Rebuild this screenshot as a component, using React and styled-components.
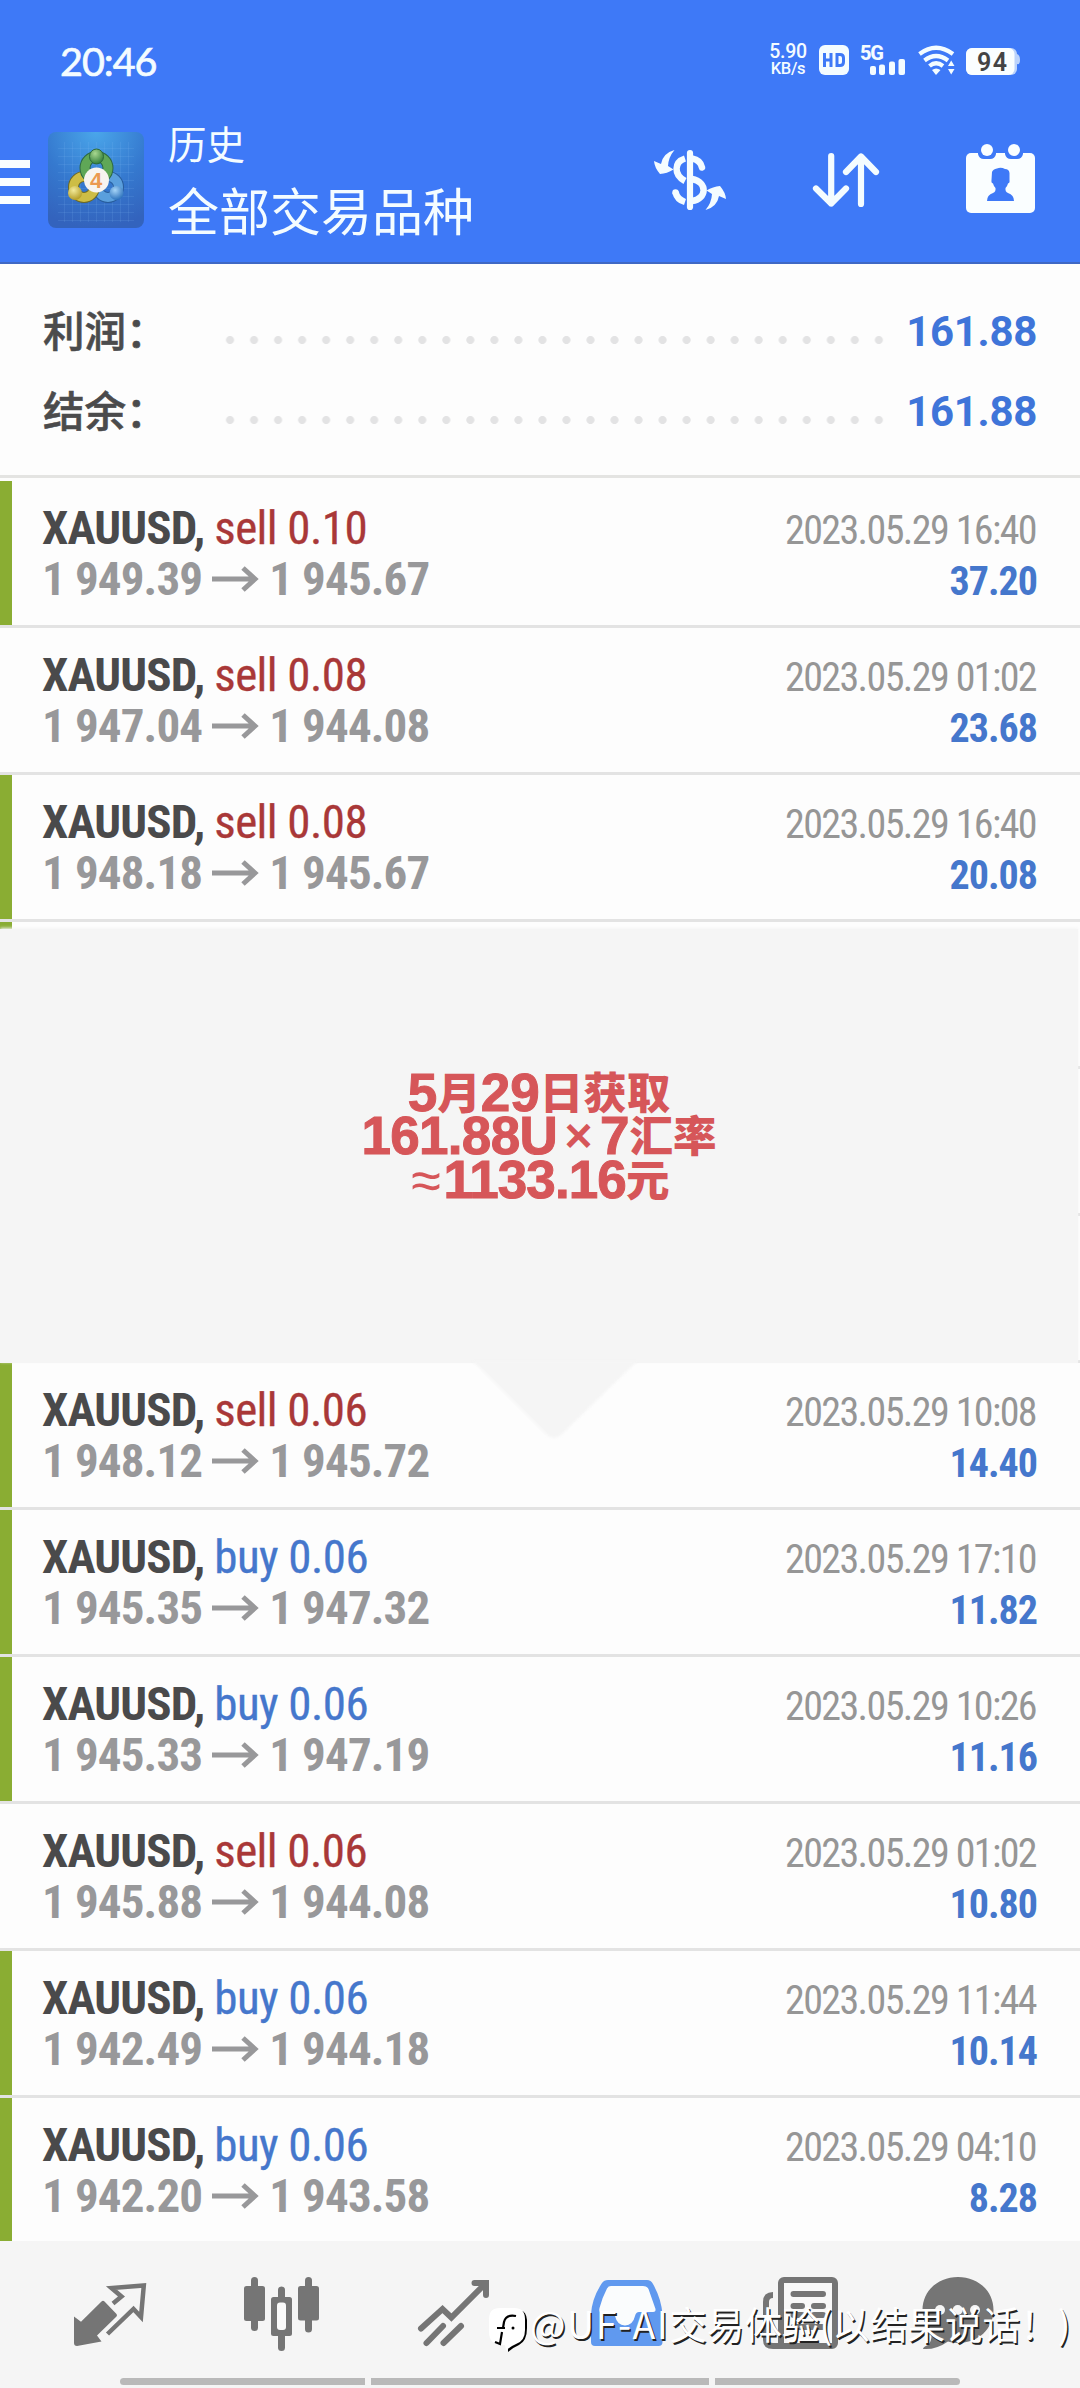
import React from "react";
import styled, { createGlobalStyle } from "styled-components";

const EstiloGlobal = createGlobalStyle`
  * {
    box-sizing: border-box;
  }
  body {
    margin: 0;
    background: #fdfdfd;
    font-family: Roboto, "Noto Sans CJK SC", sans-serif;
  }
  svg {
    display: block;
    flex: none;
  }
`;

const Pantalla = styled.div`
  position: relative;
  width: 1080px;
  height: 2388px;
  display: flex;
  flex-direction: column;
  overflow: hidden;
  background: #fdfdfd;
`;

const Header = styled.header`
  flex: none;
  height: 264px;
  background: #3e79f7;
  border-bottom: 2px solid #3f68c4;
  color: #f4fcff;
`;

const BarraEstado = styled.div`
  height: 118px;
  padding: 2px 60px 0 60px;
  display: flex;
  align-items: center;
  justify-content: space-between;
`;

const Hora = styled.div`
  font: 400 39.5px/48px Lato, sans-serif;
  letter-spacing: -1px;
  padding-top: 1px;
  -webkit-text-stroke: 0.7px #f4fcff;
`;

const Indicadores = styled.div`
  display: flex;
  align-items: center;
  gap: 11px;
`;

const Velocidad = styled.div`
  width: 40px;
  font: 500 19.5px/17px Roboto, sans-serif;
  letter-spacing: -0.3px;
  text-align: center;
  white-space: nowrap;
  small {
    display: block;
    font-size: 16.5px;
  }
`;

const Toolbar = styled.div`
  height: 144px;
  padding-right: 36px;
  display: flex;
  align-items: flex-start;
`;

const Hamburguesa = styled.div`
  width: 30px;
  margin: 42px 18px 0 0;
  display: grid;
  gap: 10px;
  i {
    height: 8px;
    background: #fafeff;
  }
`;

const Logo = styled.div`
  margin: 14px 24px 0 0;
`;

const Titulos = styled.div`
  flex: 1;
  font-family: "Noto Sans CJK SC", sans-serif;
`;

const Subtitulo = styled.div`
  font-size: 38.5px;
  line-height: 48px;
`;

const Titulo = styled.div`
  font-size: 51px;
  line-height: 86px;
`;

const Acciones = styled.div`
  display: flex;
  gap: 72px;
  padding-top: 20px;
`;

const Resumen = styled.section`
  flex: none;
  height: 214px;
  padding: 28px 43px 0;
  border-bottom: 3px solid #e4e4e2;
  margin-bottom: 3px;
`;

const FilaResumen = styled.div`
  display: flex;
  height: 80px;
`;

const Etiqueta = styled.div`
  width: 175px;
  font: 500 41.5px/74px "Noto Sans CJK SC", sans-serif;
  color: #4b4b4c;
  -webkit-text-stroke: 0.6px #4b4b4c;
`;

const Puntos = styled.div`
  width: 673px;
  height: 8px;
  margin-top: 44px;
  background: radial-gradient(circle at center, #e3e3e4 3.6px, transparent 4.4px) 0 0 / 24.04px 8px;
`;

const Total = styled.div`
  flex: 1;
  text-align: right;
  font: 700 42px/80px Roboto, sans-serif;
  color: #3f75d9;
  letter-spacing: -0.3px;
`;

const Lista = styled.main`
  flex: none;
`;

const Fila = styled.div`
  display: flex;
  height: ${(p) => (p.$ultima ? "143px" : "147px")};
  border-bottom: ${(p) => (p.$ultima ? "none" : "3px solid #e3e3e3")};
  font-family: "Roboto Condensed", Roboto, sans-serif;
`;

const Marca = styled.div`
  width: 12px;
  margin-right: 30px;
  background: ${(p) => (p.$activa ? "#8aad33" : "transparent")};
`;

const Operacion = styled.div`
  flex: 1;
  padding-top: 21px;
  font-size: 47px;
  line-height: 51px;
  letter-spacing: -0.85px;
  white-space: nowrap;
`;

const Simbolo = styled.b`
  color: #4a4a4b;
`;

const Tipo = styled.span`
  color: ${(p) => (p.$tipo === "sell" ? "#a93838" : "#4577cc")};
  letter-spacing: -0.55px;
  -webkit-text-stroke: 0.3px;
`;

const Precios = styled.div`
  display: flex;
  align-items: center;
  color: #98989a;
  font-weight: 700;
  svg {
    margin: 0 10px 0 10px;
  }
`;

const Resultado = styled.div`
  padding: 24px 43px 0 0;
  text-align: right;
  font-size: 40px;
  line-height: 51px;
`;

const Fecha = styled.div`
  color: #969696;
  letter-spacing: -1.6px;
  padding-right: 1px;
`;

const Ganancia = styled.div`
  color: #4577cc;
  font-weight: 700;
  letter-spacing: -1px;
`;

const Bloque = styled.div`
  position: relative;
`;

const Globo = styled.div`
  position: absolute;
  left: 0;
  top: 7px;
  width: 1078px;
  height: 434px;
  background: #f5f5f5;
  box-shadow: 0 -1px 3px #f5f5f5;
  display: flex;
  flex-direction: column;
  align-items: center;
  padding-top: 142px;
  color: #d65659;
`;

const Punta = styled.svg`
  position: absolute;
  left: 470px;
  top: 439px;
  filter: blur(1px);
`;

const LineaGlobo = styled.div`
  height: 43.5px;
  display: flex;
  align-items: center;
  white-space: nowrap;
`;

const Cifra = styled.span`
  font: 700 53px/44px "Liberation Sans", Arial, sans-serif;
  letter-spacing: ${(p) => p.$ls || "0"};
  -webkit-text-stroke: 1px #d65659;
`;

const Hanzi = styled.span`
  margin-bottom: 4px;
  font: 900 43.5px/44px "Noto Sans CJK SC", sans-serif;
`;

const Signo = styled.span`
  width: ${(p) => p.$w}px;
  text-align: center;
  font: ${(p) => p.$peso} ${(p) => p.$t}px/44px "Liberation Sans", Arial, sans-serif;
`;

const Tabs = styled.nav`
  flex: none;
  height: 147px;
  padding: 31px 0 0 68px;
  display: flex;
  align-items: flex-start;
  gap: 88px;
  background: #f5f5f5;
  > svg:last-child {
    margin-left: -12px;
  }
`;

const Gesto = styled.div`
  position: absolute;
  left: 120px;
  bottom: 3px;
  width: 840px;
  height: 7px;
  border-radius: 4px;
  overflow: hidden;
  display: grid;
  grid-template-columns: 245px 338px 245px;
  gap: 6px;
  i {
    background: #b9b9b9;
  }
`;

const Autor = styled.div`
  position: absolute;
  left: 488px;
  top: 2300px;
  display: flex;
  gap: 2px;
  font: 400 37.6px/46px "Noto Sans CJK SC", sans-serif;
  color: #fff;
  white-space: nowrap;
  text-shadow: 1.5px 1.5px 0.5px #222;
  svg {
    margin-top: 4px;
  }
  b {
    font-weight: 400;
    letter-spacing: 1.5px;
  }
`;

const operaciones = [
  { tipo: "sell", lote: "0.10", de: "1 949.39", a: "1 945.67", fecha: "2023.05.29 16:40", ganancia: "37.20", activa: true },
  { tipo: "sell", lote: "0.08", de: "1 947.04", a: "1 944.08", fecha: "2023.05.29 01:02", ganancia: "23.68" },
  { tipo: "sell", lote: "0.08", de: "1 948.18", a: "1 945.67", fecha: "2023.05.29 16:40", ganancia: "20.08", activa: true },
];

const operacionesAbajo = [
  { tipo: "sell", lote: "0.06", de: "1 948.12", a: "1 945.72", fecha: "2023.05.29 10:08", ganancia: "14.40", activa: true },
  { tipo: "buy", lote: "0.06", de: "1 945.35", a: "1 947.32", fecha: "2023.05.29 17:10", ganancia: "11.82", activa: true },
  { tipo: "buy", lote: "0.06", de: "1 945.33", a: "1 947.19", fecha: "2023.05.29 10:26", ganancia: "11.16", activa: true },
  { tipo: "sell", lote: "0.06", de: "1 945.88", a: "1 944.08", fecha: "2023.05.29 01:02", ganancia: "10.80" },
  { tipo: "buy", lote: "0.06", de: "1 942.49", a: "1 944.18", fecha: "2023.05.29 11:44", ganancia: "10.14", activa: true },
  { tipo: "buy", lote: "0.06", de: "1 942.20", a: "1 943.58", fecha: "2023.05.29 04:10", ganancia: "8.28", activa: true },
];

const FilaOperacion = ({ op, ultima }) => (
  <Fila $ultima={ultima}>
    <Marca $activa={op.activa} />
    <Operacion>
      <div>
        <Simbolo>XAUUSD,</Simbolo>{" "}
        <Tipo $tipo={op.tipo}>
          {op.tipo} {op.lote}
        </Tipo>
      </div>
      <Precios>
        {op.de}
        <svg width="47" height="26" viewBox="0 0 47 26" fill="none" stroke="#98989a" strokeWidth="5">
          <path d="M0 13H43M31 2L43 13L31 24" />
        </svg>
        {op.a}
      </Precios>
    </Operacion>
    <Resultado>
      <Fecha>{op.fecha}</Fecha>
      <Ganancia>{op.ganancia}</Ganancia>
    </Resultado>
  </Fila>
);

const IconoApp = () => (
  <svg width="96" height="96" viewBox="0 0 96 96">
    <defs>
      <radialGradient id="fondo" cx="0.5" cy="0" r="1">
        <stop offset="0" stopColor="#4aa6ea" />
        <stop offset="0.55" stopColor="#3579cf" />
        <stop offset="1" stopColor="#3363bd" />
      </radialGradient>
      <pattern id="malla" width="8" height="8" patternUnits="userSpaceOnUse">
        <path d="M0 .5H8M.5 0V8" stroke="#8cc4f4" strokeOpacity="0.13" />
      </pattern>
      <radialGradient id="verde" cx="0.4" cy="0.3" r="0.7">
        <stop offset="0" stopColor="#a8d890" />
        <stop offset="1" stopColor="#35803c" />
      </radialGradient>
      <radialGradient id="oro" cx="0.4" cy="0.3" r="0.7">
        <stop offset="0" stopColor="#f2ea9a" />
        <stop offset="1" stopColor="#b59e28" />
      </radialGradient>
      <radialGradient id="azul" cx="0.4" cy="0.3" r="0.7">
        <stop offset="0" stopColor="#a5d4f7" />
        <stop offset="1" stopColor="#2e73bd" />
      </radialGradient>
    </defs>
    <rect width="96" height="96" rx="8" fill="url(#fondo)" />
    <rect x="10" y="10" width="76" height="80" fill="url(#malla)" />
    <g fill="none" strokeWidth="9">
      <circle cx="60" cy="55" r="10.500" stroke="#285d9c" strokeWidth="11" />
      <circle cx="60" cy="55" r="10.500" stroke="#5a9fdd" />
      <circle cx="36" cy="55" r="10.500" stroke="#6d6a26" strokeWidth="11" />
      <circle cx="36" cy="55" r="10.500" stroke="#cdbd45" />
      <circle cx="48.500" cy="36" r="11.500" stroke="#2c6843" strokeWidth="11" />
      <circle cx="48.500" cy="36" r="11.500" stroke="#5fa757" />
    </g>
    <ellipse cx="48.500" cy="24.500" rx="7" ry="7.500" fill="url(#verde)" stroke="#2b683a" />
    <circle cx="27" cy="61" r="7" fill="url(#oro)" />
    <circle cx="68.500" cy="61" r="7" fill="url(#azul)" />
    <circle cx="48.500" cy="48" r="12.500" fill="#f7f4f0" />
    <text x="48" y="55.500" textAnchor="middle" fontSize="22" fontFamily="Liberation Sans" fontWeight="700" fill="#eb9a50">
      4
    </text>
  </svg>
);

const flecha = "M26.500 12Q15 15 13 26L6 23Q6.500 29.500 12 36Q19 35.500 25.500 31.500L20 28Q20.500 19 26.500 12Z";

const IconoDolar = () => (
  <svg width="84" height="84" viewBox="0 0 84 84" fill="none" stroke="#f4fcff" strokeWidth="6.500" strokeLinecap="round">
    <path d="M42 15V69" strokeWidth="6.200" />
    <path d="M37 20.500C26 24 25.500 37 37 43M37 64Q29 61.500 27.500 54" strokeLinecap="butt" />
    <circle cx="27.500" cy="54.500" r="3.200" fill="#f4fcff" stroke="none" />
    <path d="M44 20.500Q52.500 22 54 29.500M44 41C60 44 59 61 44 63" />
    <path d={flecha} fill="#f4fcff" stroke="none" />
    <path d={flecha} fill="#f4fcff" stroke="none" transform="rotate(180 42 42)" />
  </svg>
);

const IconoOrden = () => (
  <svg width="84" height="84" viewBox="0 0 84 84" fill="none" stroke="#f4fcff" strokeWidth="6.200" strokeLinecap="round" strokeLinejoin="round">
    <path d="M27.200 18V65.500M12 50.500L27.200 65.500L42 50.500" />
    <path d="M57 66V18.500M42 34L57 18.500L72 34" />
  </svg>
);

const IconoCalendario = () => (
  <svg width="84" height="84" viewBox="0 0 84 84">
    <rect x="6" y="15" width="69" height="60" rx="5" fill="#fafeff" />
    <g fill="#3e79f7">
      <path d="M18 14V16Q19 21 24 21H30Q35 21 36 16V14ZM45 14V16Q46 21 51 21H57Q62 21 63 16V14Z" />
      <path d="M32 34Q33 31 37 30.500Q41 29 45 31Q49 31 49.500 35V42Q50 45 48 45.500Q47 49 45.500 50Q45 54 48 55Q54 57 54 63H27Q27 57 33 55Q36 54 35.500 50Q34 49 33 45.500Q31 45 31.500 42Z" />
    </g>
    <circle cx="27" cy="12" r="6" fill="#fafeff" />
    <circle cx="54" cy="12" r="6" fill="#fafeff" />
  </svg>
);

const App = () => {
  return (
    <>
      <EstiloGlobal />
      <Pantalla>
        <Header>
          <BarraEstado>
            <Hora>20:46</Hora>
            <Indicadores>
              <Velocidad>
                5.90
                <small>KB/s</small>
              </Velocidad>
              <svg width="30" height="30" viewBox="0 0 30 30">
                <rect width="30" height="30" rx="6" fill="#f4fcff" />
                <path d="M5.500 8V22M12 8V22M5.500 15H12M18 9.500H21Q24.500 9.500 24.500 13V17Q24.500 20.500 21 20.500H18Z" fill="none" stroke="#3e79f7" strokeWidth="3" />
              </svg>
              <svg width="47" height="30" viewBox="0 0 47 30" fill="#f4fcff" overflow="visible">
                <text x="0" y="14.500" fontSize="20" fontFamily="Roboto" fontWeight="800" textLength="24">
                  5G
                </text>
                <rect x="10" y="21" width="6" height="9" rx="2" />
                <rect x="19" y="19.500" width="6" height="10.500" rx="2" />
                <rect x="29" y="16.500" width="6" height="13.500" rx="2" />
                <rect x="38.500" y="14" width="6.500" height="16" rx="2" />
              </svg>
              <svg width="37" height="30" viewBox="0 0 37 30" fill="none" stroke="#f4fcff" strokeWidth="4.200">
                <path d="M1.500 9Q18 -3.500 35 9M6.500 15.500Q18 6.500 30 15.500M11.500 21Q18 15.500 25 21" />
                <path d="M14 25Q18 22 22.500 25L18 30Z" fill="#f4fcff" stroke="none" />
                <path d="M30 21L33.200 15.500L36.500 21ZM30 24L33.200 29.500L36.500 24Z" fill="#f4fcff" stroke="none" />
              </svg>
              <svg width="54" height="30" viewBox="0 0 54 30">
                <path d="M48 9H51Q54 10 54 15Q54 20 51 19H48Z" fill="#bcd3fb" />
                <rect y="3" width="51" height="27" rx="6" fill="#bcd3fb" />
                <rect y="3" width="48.500" height="27" rx="6" fill="#fafeff" />
                <text x="26" y="25.500" textAnchor="middle" fontSize="25" fontFamily="Roboto" fontWeight="600" fill="#444" textLength="30">
                  94
                </text>
              </svg>
            </Indicadores>
          </BarraEstado>
          <Toolbar>
            <Hamburguesa>
              <i />
              <i />
              <i />
            </Hamburguesa>
            <Logo>
              <IconoApp />
            </Logo>
            <Titulos>
              <Subtitulo>历史</Subtitulo>
              <Titulo>全部交易品种</Titulo>
            </Titulos>
            <Acciones>
              <IconoDolar />
              <IconoOrden />
              <IconoCalendario />
            </Acciones>
          </Toolbar>
        </Header>

        <Resumen>
          <FilaResumen>
            <Etiqueta>利润：</Etiqueta>
            <Puntos />
            <Total>161.88</Total>
          </FilaResumen>
          <FilaResumen>
            <Etiqueta>结余：</Etiqueta>
            <Puntos />
            <Total>161.88</Total>
          </FilaResumen>
        </Resumen>

        <Lista>
          {operaciones.map((op, i) => (
            <FilaOperacion key={i} op={op} />
          ))}
          <Bloque>
            <Fila>
              <Marca $activa />
            </Fila>
            <Fila />
            <Fila />
            <Globo>
              <LineaGlobo>
                <Cifra>5</Cifra>
                <Hanzi>月</Hanzi>
                <Cifra>29</Cifra>
                <Hanzi>日获取</Hanzi>
              </LineaGlobo>
              <LineaGlobo>
                <Cifra $ls="-0.7px">161.88U</Cifra>
                <Signo $w="43" $peso="700" $t="48">×</Signo>
                <Cifra>7</Cifra>
                <Hanzi>汇率</Hanzi>
              </LineaGlobo>
              <LineaGlobo>
                <Signo $w="35" $peso="400" $t="54">≈</Signo>
                <Cifra $ls="-0.9px">1133.16</Cifra>
                <Hanzi>元</Hanzi>
              </LineaGlobo>
            </Globo>
            <Punta width="170" height="86" viewBox="0 0 170 86">
              <path d="M2 0H168L161 6L91 74Q84 80 77 74L11 8Z" fill="#f5f5f5" />
            </Punta>
          </Bloque>
          {operacionesAbajo.map((op, i) => (
            <FilaOperacion key={i} op={op} ultima={i === operacionesAbajo.length - 1} />
          ))}
        </Lista>

        <Tabs>
          <svg width="84" height="84" viewBox="0 0 84 84">
            <path d="M45 31.500L53.500 24.500L43.500 16L75.800 13.500L73 45L65.500 37L39.500 62" fill="none" stroke="#757575" strokeWidth="4.500" />
            <path d="M6 44.500L13 49.700L33.500 29.500Q35 28 36.500 29.500L48.500 42Q49.500 43.200 48.500 44.500L29 63.500L33.500 69.500L9 74Q6 74 6 71Z" fill="#757575" />
          </svg>
          <svg width="84" height="84" viewBox="0 0 84 84" fill="#757575">
            <rect x="11" y="5" width="7" height="54" rx="3.500" />
            <rect x="4" y="14" width="21" height="35" rx="2.500" />
            <rect x="38" y="14.500" width="7" height="64.500" rx="3.500" />
            <rect x="31" y="25" width="21" height="39" rx="2.500" />
            <rect x="37" y="30.500" width="9" height="27.500" rx="3" fill="#fafafa" />
            <rect x="65" y="5" width="7" height="55.500" rx="3.500" />
            <rect x="58" y="14" width="21" height="34.500" rx="2.500" />
          </svg>
          <svg width="84" height="84" viewBox="0 0 84 84" fill="none" stroke="#757575" strokeWidth="6" strokeLinecap="round">
            <path d="M9 56.500L30.500 37L39.400 45.500L73 12" />
            <path d="M62.500 11H74V23" />
            <path d="M14.500 71L31 54M31.500 71L49 54" strokeLinejoin="miter" />
          </svg>
          <svg width="84" height="84" viewBox="0 0 84 84">
            <path d="M24 8H63Q67 8 69 12Q77 26 78.500 42V70Q78.500 74 74.500 74H11Q7 74 7 70V42Q8 26 18 11Q20 8 24 8Z" fill="#6099ef" />
            <path d="M27 14H59Q63 14 64.500 17L71.500 37Q72 40 69 40H55Q52 40 51 44Q49 53 41 53.500Q33 53 31 44Q30 40 27 40H17Q14.500 40 15.500 36Q18 26 23 16.500Q24 14 27 14Z" fill="#fafcfd" />
          </svg>
          <svg width="84" height="84" viewBox="0 0 84 84" fill="none" stroke="#757575" strokeWidth="6" strokeLinecap="round">
            <path d="M17 23Q10 23 10 30V68Q10 74 17 74H30" strokeLinecap="butt" />
            <rect x="25" y="8" width="54" height="66" rx="3" fill="#f8f8f8" />
            <path d="M37.500 22H67M37.500 34H46M58 34H67M37.500 43H46M58 43H67M37.500 55H67" />
          </svg>
          <svg width="84" height="84" viewBox="0 0 84 84">
            <path d="M42 5C62 5 77.500 19 77.500 38C77.500 57 62 71 42 71Q37 71 32 69.500Q20 78 7 77Q7 75 12 73Q16 69 15.500 62Q6.500 52 6.500 38C6.500 19 22 5 42 5Z" fill="#757575" />
            <g fill="#f5f5f5">
              <circle cx="24" cy="38" r="5" />
              <circle cx="41.700" cy="38" r="5" />
              <circle cx="59" cy="38" r="5" />
            </g>
          </svg>
        </Tabs>
        <Gesto>
          <i />
          <i />
          <i />
        </Gesto>
        <Autor>
          <svg width="40" height="50" viewBox="0 0 40 50">
            <path d="M20 48Q26 43 31 41Q39 37 39 24V16Q38 7 33 7L20 40Z" fill="#000" />
            <path d="M12 4H26Q37 4 37 15V26Q37 37 28 40Q21 43 18 47L17 41Q1 42 1 28V15Q1 4 12 4Z" fill="#fff" />
            <path d="M28 12Q18 10 16 18L15 24M9 24H17M14 28L12 40L7 38" fill="none" stroke="#000" strokeWidth="2.200" />
            <circle cx="25" cy="24" r="1.500" fill="#000" />
          </svg>
          <span>
            <b>@UF-AI</b>交易体验(以结果说话！)
          </span>
        </Autor>
      </Pantalla>
    </>
  );
};

export default App;
